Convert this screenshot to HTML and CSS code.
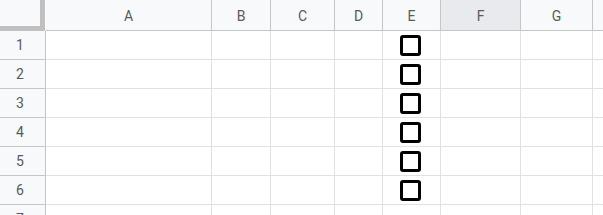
FILE: index.html
```html
<!DOCTYPE html>
<html lang="en">
<head>
  <meta charset="UTF-8">
  <title>Sheet</title>
  <link rel="stylesheet" href="styles.css">
</head>
<body>
  <div class="sheet">
    <div class="row head">
      <div class="corner"></div>
      <div class="col a">A</div>
      <div class="col b">B</div>
      <div class="col c">C</div>
      <div class="col d">D</div>
      <div class="col e">E</div>
      <div class="col f sel">F</div>
      <div class="col g">G</div>
      <div class="col h"></div>
    </div>
    <div class="row">
      <div class="num">1</div>
      <div class="cell a"></div><div class="cell b"></div><div class="cell c"></div><div class="cell d"></div>
      <div class="cell e"><span class="box"></span></div>
      <div class="cell f"></div><div class="cell g"></div><div class="cell h"></div>
    </div>
    <div class="row">
      <div class="num">2</div>
      <div class="cell a"></div><div class="cell b"></div><div class="cell c"></div><div class="cell d"></div>
      <div class="cell e"><span class="box"></span></div>
      <div class="cell f"></div><div class="cell g"></div><div class="cell h"></div>
    </div>
    <div class="row">
      <div class="num">3</div>
      <div class="cell a"></div><div class="cell b"></div><div class="cell c"></div><div class="cell d"></div>
      <div class="cell e"><span class="box"></span></div>
      <div class="cell f"></div><div class="cell g"></div><div class="cell h"></div>
    </div>
    <div class="row">
      <div class="num">4</div>
      <div class="cell a"></div><div class="cell b"></div><div class="cell c"></div><div class="cell d"></div>
      <div class="cell e"><span class="box"></span></div>
      <div class="cell f"></div><div class="cell g"></div><div class="cell h"></div>
    </div>
    <div class="row">
      <div class="num">5</div>
      <div class="cell a"></div><div class="cell b"></div><div class="cell c"></div><div class="cell d"></div>
      <div class="cell e"><span class="box"></span></div>
      <div class="cell f"></div><div class="cell g"></div><div class="cell h"></div>
    </div>
    <div class="row">
      <div class="num">6</div>
      <div class="cell a"></div><div class="cell b"></div><div class="cell c"></div><div class="cell d"></div>
      <div class="cell e"><span class="box"></span></div>
      <div class="cell f"></div><div class="cell g"></div><div class="cell h"></div>
    </div>
    <div class="row">
      <div class="num">7</div>
      <div class="cell a"></div><div class="cell b"></div><div class="cell c"></div><div class="cell d"></div>
      <div class="cell e"></div>
      <div class="cell f"></div><div class="cell g"></div><div class="cell h"></div>
    </div>
  </div>
</body>
</html>
```

FILE: styles.css
```css
body {
  margin: 0;
  font-family: Roboto, "Liberation Sans", sans-serif;
  background: #fff;
  overflow: hidden;
}
.sheet {
  width: 603px;
  height: 215px;
  overflow: hidden;
}
.row {
  display: flex;
  height: 29px;
}
.row.head {
  height: 31px;
}
.corner {
  width: 40px;
  height: 26px;
  flex: none;
  background: #f8f9fa;
  border-right: 5px solid #c0c0c0;
  border-bottom: 5px solid #c0c0c0;
  box-sizing: content-box;
}
.col,
.cell,
.num {
  flex: none;
  box-sizing: border-box;
}
.col {
  display: flex;
  align-items: center;
  justify-content: center;
  background: #f8f9fa;
  border-right: 1px solid #c4c7c5;
  border-bottom: 1px solid #c4c7c5;
  color: #575a5e;
  font-size: 14px;
  padding-top: 2px;
}
.col.a {
  margin-left: 1px;
}
.col.sel {
  background: #e8eaed;
}
.num {
  width: 46px;
  display: flex;
  align-items: center;
  justify-content: center;
  background: #f8f9fa;
  border-right: 1px solid #c4c7c5;
  border-bottom: 1px solid #c4c7c5;
  color: #575a5e;
  font-size: 14px;
  padding-right: 5px;
}
.cell {
  border-right: 1px solid #e1e1e1;
  border-bottom: 1px solid #e1e1e1;
  display: flex;
  align-items: center;
  justify-content: center;
}
.a { width: 166px; }
.b { width: 59px; }
.c { width: 64px; }
.d { width: 48px; }
.e { width: 58px; }
.f { width: 80px; }
.g { width: 72px; }
.h { width: 60px; }
.box {
  width: 21px;
  height: 21px;
  box-sizing: border-box;
  border: 3px solid #000;
  border-radius: 3px;
  margin-left: -2px;
}
```
